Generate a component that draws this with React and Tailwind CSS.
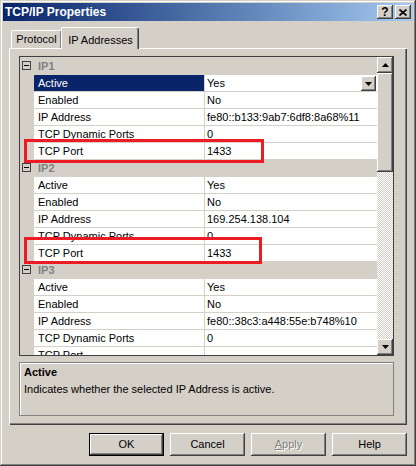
import React from "react";

const raised =
  "shadow-[inset_-1px_-1px_#404040,inset_1px_1px_#ffffff,inset_-2px_-2px_#808080,inset_2px_2px_#d4d0c8]";

const groups = [
  {
    name: "IP1",
    rows: [
      ["Active", "Yes"],
      ["Enabled", "No"],
      ["IP Address", "fe80::b133:9ab7:6df8:8a68%11"],
      ["TCP Dynamic Ports", "0"],
      ["TCP Port", "1433"],
    ],
  },
  {
    name: "IP2",
    rows: [
      ["Active", "Yes"],
      ["Enabled", "No"],
      ["IP Address", "169.254.138.104"],
      ["TCP Dynamic Ports", "0"],
      ["TCP Port", "1433"],
    ],
  },
  {
    name: "IP3",
    rows: [
      ["Active", "Yes"],
      ["Enabled", "No"],
      ["IP Address", "fe80::38c3:a448:55e:b748%10"],
      ["TCP Dynamic Ports", "0"],
      ["TCP Port", ""],
    ],
  },
];

function Arrow({ up }) {
  return (
    <svg width="7" height="4" viewBox="0 0 7 4">
      {up ? <polygon points="3.5,0 7,4 0,4" fill="#000" /> : <polygon points="0,0 7,0 3.5,4" fill="#000" />}
    </svg>
  );
}

function Category({ name }) {
  return (
    <div className="flex h-[17px] bg-[#d4d0c8]">
      <div className="w-[14px] pl-[2px] pt-[3px]">
        <div className="w-[9px] h-[9px] border border-[#404040] flex items-center justify-center">
          <div className="w-[5px] h-[1px] bg-black" />
        </div>
      </div>
      <div className="pl-[4px] leading-[17px] font-bold text-[#808080]">{name}</div>
    </div>
  );
}

function Row({ label, value, selected }) {
  return (
    <div className="flex h-[17px]">
      <div className="w-[14px] bg-[#d4d0c8]" />
      <div
        className={`w-[170px] h-[17px] border-b border-[#d4d0c8] pl-[4px] leading-[16px] whitespace-nowrap overflow-hidden ${
          selected ? "bg-[#0a246a] text-white" : "bg-white text-black"
        }`}
      >
        {label}
      </div>
      <div className="w-[1px] bg-[#d4d0c8]" />
      <div className="w-[172px] h-[17px] border-b border-[#d4d0c8] bg-white flex items-start">
        <div className="flex-1 pl-[2px] leading-[16px] whitespace-nowrap overflow-hidden">{value}</div>
        {selected && (
          <div className={`w-[15px] h-[15px] mt-[1px] mr-[1px] bg-[#d4d0c8] flex items-center justify-center ${raised}`}>
            <Arrow />
          </div>
        )}
      </div>
    </div>
  );
}

export default function App() {
  return (
    <div
      className="w-[416px] h-[466px] bg-[#d4d0c8] p-[3px] flex flex-col text-[11px] text-black shadow-[inset_-1px_-1px_#404040,inset_1px_1px_#d4d0c8,inset_-2px_-2px_#808080,inset_2px_2px_#ffffff]"
      style={{ fontFamily: '"Liberation Sans", Arial, sans-serif' }}
    >
      {/* title bar */}
      <div className="h-[18px] flex items-center bg-linear-to-r from-[#0a246a] to-[#a6caf0] pl-[2px] pr-[2px]">
        <div className="flex-1 font-bold text-[12px] text-white leading-[18px]">TCP/IP Properties</div>
        <div className={`w-[16px] h-[14px] bg-[#d4d0c8] flex items-center justify-center font-bold text-[12px] leading-none ${raised}`}>
          ?
        </div>
        <div className={`w-[16px] h-[14px] ml-[2px] bg-[#d4d0c8] flex items-center justify-center ${raised}`}>
          <svg width="8" height="7" viewBox="0 0 8 7">
            <path d="M0.5 0.5 L7.5 6.5 M7.5 0.5 L0.5 6.5" stroke="#000" strokeWidth="1.6" />
          </svg>
        </div>
      </div>

      <div className="flex-1 flex flex-col px-[6px] pt-[6px]">
        {/* tabs */}
        <div className="flex items-end h-[21px] relative z-10">
          <div className="ml-[2px] w-[50px] h-[18px] border-l border-t border-white shadow-[inset_-1px_0_#808080] rounded-tl-[2px] flex items-center justify-center">
            Protocol
          </div>
          <div className="w-[78px] h-[22px] -mb-[1px] bg-[#d4d0c8] border-l border-t border-white shadow-[inset_-1px_0_#404040,inset_-2px_0_#808080] rounded-t-[2px] flex items-start justify-center pt-[4px]">
            IP Addresses
          </div>
        </div>

        {/* tab panel */}
        <div className="h-[377px] flex flex-col pt-[8px] pl-[10px] pr-[13px] shadow-[inset_1px_1px_#ffffff,inset_-1px_-1px_#404040,inset_-2px_-2px_#808080]">
          <div className="relative h-[300px] border border-[#404040] flex bg-white">
            <div className="w-[357px] pt-[1px] bg-[#d4d0c8] overflow-hidden">
              {groups.map((g, gi) => (
                <div key={g.name}>
                  <Category name={g.name} />
                  {g.rows.map(([label, value], ri) => (
                    <Row key={label} label={label} value={value} selected={gi === 0 && ri === 0} />
                  ))}
                </div>
              ))}
            </div>
            {/* scrollbar */}
            <div className="w-[16px] flex flex-col">
              <div className={`h-[16px] bg-[#d4d0c8] flex items-center justify-center ${raised}`}>
                <Arrow up />
              </div>
              <div className={`h-[99px] bg-[#d4d0c8] ${raised}`} />
              <div className="flex-1 bg-[repeating-conic-gradient(#ffffff_0%_25%,#d4d0c8_0%_50%)] bg-[length:2px_2px]" />
              <div className={`h-[16px] bg-[#d4d0c8] flex items-center justify-center ${raised}`}>
                <Arrow />
              </div>
            </div>

            <div className="absolute left-[4px] top-[82px] w-[240px] h-[24px] border-[3px] border-[#ed1c24]" />
            <div className="absolute left-[4px] top-[180px] w-[238px] h-[27px] border-[3px] border-[#ed1c24]" />
          </div>

          {/* description */}
          <div className="mt-[6px] h-[54px] border border-[#808080] shadow-[inset_1px_1px_#ffffff] px-[4px] pt-[2px]">
            <div className="font-bold leading-[14px]">Active</div>
            <div className="mt-[3px] leading-[14px]">Indicates whether the selected IP Address is active.</div>
          </div>
        </div>

        {/* buttons */}
        <div className="flex justify-end gap-[6px] mt-[8px]">
          <div className="w-[75px] h-[23px] border border-black">
            <div className={`w-full h-full flex items-center justify-center ${raised}`}>OK</div>
          </div>
          <div className={`w-[75px] h-[23px] flex items-center justify-center ${raised}`}>Cancel</div>
          <div className={`w-[75px] h-[23px] flex items-center justify-center text-[#808080] [text-shadow:1px_1px_0_#ffffff] ${raised}`}>
            <span>
              <span className="underline">A</span>pply
            </span>
          </div>
          <div className={`w-[75px] h-[23px] flex items-center justify-center ${raised}`}>Help</div>
        </div>
      </div>
    </div>
  );
}
